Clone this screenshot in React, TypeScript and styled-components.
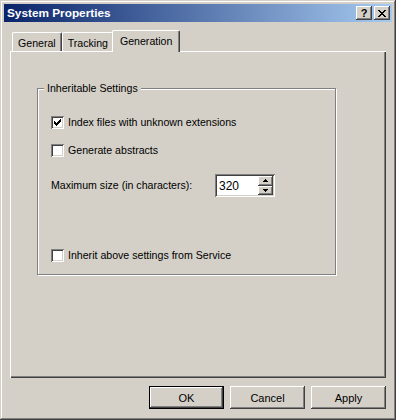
import React from "react";
import styled, { createGlobalStyle, css } from "styled-components";

const Global = createGlobalStyle`
  html, body { margin: 0; padding: 0; background: #d4d0c8; }
  body { font-family: "Liberation Sans", Arial, sans-serif; font-size: 10.6px; color: #000; }
  * { box-sizing: border-box; }
`;

const face = "#d4d0c8";

const raised = css`
  box-shadow: inset -1px -1px 0 #404040, inset 1px 1px 0 #ffffff,
    inset -2px -2px 0 #808080, inset 2px 2px 0 ${face};
`;

const sunken = css`
  box-shadow: inset 1px 1px 0 #808080, inset -1px -1px 0 #ffffff,
    inset 2px 2px 0 #404040, inset -2px -2px 0 ${face};
`;

const Window = styled.div`
  width: 396px;
  height: 420px;
  background: ${face};
  padding: 4px;
  display: flex;
  flex-direction: column;
  box-shadow: inset -1px -1px 0 #404040, inset 1px 1px 0 ${face},
    inset -2px -2px 0 #808080, inset 2px 2px 0 #ffffff;
`;

const TitleBar = styled.div`
  height: 18px;
  flex: none;
  background: linear-gradient(to right, #0a246a, #a6caf0);
  display: flex;
  align-items: center;
  padding: 0 2px 0 3px;
`;

const Title = styled.div`
  flex: 1;
  color: #fff;
  font-weight: bold;
  font-size: 11.8px;
`;

const CaptionButton = styled.div<{ $gap?: number }>`
  width: 16px;
  height: 14px;
  background: ${face};
  ${raised};
  display: flex;
  align-items: center;
  justify-content: center;
  font-weight: bold;
  font-size: 11px;
  line-height: 1;
  margin-left: ${(p) => p.$gap ?? 0}px;
`;

const Body = styled.div`
  flex: 1;
  display: flex;
  flex-direction: column;
  padding: 8px 6px 7px 6px;
`;

const TabStrip = styled.div`
  display: flex;
  align-items: flex-end;
  height: 21px;
  padding-left: 2px;
`;

const Tab = styled.div<{ $active?: boolean }>`
  position: relative;
  height: ${(p) => (p.$active ? 22 : 19)}px;
  padding: ${(p) => (p.$active ? "0 7px 2px 7px" : "1px 5px 0 5px")};
  margin: ${(p) => (p.$active ? "0 -2px -1px -2px" : "0")};
  z-index: ${(p) => (p.$active ? 2 : 1)};
  background: ${face};
  display: flex;
  align-items: center;
  border-top-left-radius: 2px;
  border-top-right-radius: 2px;
  border-top: 1px solid #fff;
  border-left: 1px solid #fff;
  border-right: 1px solid #404040;
  box-shadow: inset -1px 0 0 #808080;
  white-space: nowrap;
`;

const Panel = styled.div`
  flex: 1;
  background: ${face};
  box-shadow: inset 1px 1px 0 #ffffff, inset -1px -1px 0 #404040,
    inset -2px -2px 0 #808080;
  padding: 37px 0 0 27px;
`;

const GroupBox = styled.div`
  position: relative;
  width: 299px;
  height: 187px;
  border: 1px solid #808080;
  box-shadow: 1px 1px 0 #fff, inset 1px 1px 0 #fff;
  padding: 27px 0 0 13px;
  display: flex;
  flex-direction: column;
`;

const Legend = styled.span`
  position: absolute;
  top: -7px;
  left: 6px;
  padding: 0 3px;
  background: ${face};
  line-height: 13px;
`;

const Row = styled.div<{ $mt?: number }>`
  display: flex;
  align-items: center;
  margin-top: ${(p) => p.$mt ?? 0}px;
`;

const CheckBox = styled.div`
  width: 13px;
  height: 13px;
  flex: none;
  background: #fff;
  ${sunken};
  display: flex;
  align-items: center;
  justify-content: center;
`;

const Label = styled.span`
  line-height: 13px;
  margin-left: 4px;
  white-space: nowrap;
`;

const FieldLabel = styled.span`
  width: 164px;
  line-height: 13px;
  white-space: nowrap;
`;

const SpinField = styled.div`
  width: 60px;
  height: 23px;
  background: #fff;
  ${sunken};
  display: flex;
  align-items: center;
  padding: 2px 2px 2px 4px;
`;

const SpinValue = styled.span`
  flex: 1;
  font-size: 12px;
`;

const SpinButtons = styled.div`
  display: flex;
  flex-direction: column;
  width: 15px;
  height: 19px;
`;

const SpinButton = styled.div`
  flex: 1;
  background: ${face};
  ${raised};
  display: flex;
  align-items: center;
  justify-content: center;
`;

const ButtonRow = styled.div`
  display: flex;
  justify-content: flex-end;
  gap: 6px;
  margin-top: 8px;
`;

const Button = styled.div<{ $default?: boolean }>`
  width: 75px;
  height: 23px;
  background: ${face};
  display: flex;
  align-items: center;
  justify-content: center;
  font-size: 11px;
  ${(p) =>
    p.$default
      ? css`
          border: 1px solid #000;
          box-shadow: inset -1px -1px 0 #404040, inset 1px 1px 0 #ffffff,
            inset -2px -2px 0 #808080;
        `
      : raised};
`;

const Check = () => (
  <svg width="7" height="7" viewBox="0 0 7 7" shapeRendering="crispEdges">
    <path
      d="M0 2h1v3h-1zM1 3h1v3h-1zM2 4h1v3h-1zM3 3h1v3h-1zM4 2h1v3h-1zM5 1h1v3h-1zM6 0h1v3h-1z"
      fill="#000"
    />
  </svg>
);

const Up = () => (
  <svg width="5" height="3" viewBox="0 0 5 3" shapeRendering="crispEdges">
    <path d="M2 0h1v1h-1zM1 1h3v1h-3zM0 2h5v1h-5z" fill="#000" />
  </svg>
);

const Down = () => (
  <svg width="5" height="3" viewBox="0 0 5 3" shapeRendering="crispEdges">
    <path d="M0 0h5v1h-5zM1 1h3v1h-3zM2 2h1v1h-1z" fill="#000" />
  </svg>
);

const CloseGlyph = () => (
  <svg width="8" height="7" viewBox="0 0 8 7" shapeRendering="crispEdges">
    <path
      d="M0 0h2v1h-2zM6 0h2v1h-2zM1 1h2v1h-2zM5 1h2v1h-2zM2 2h4v1h-4zM3 3h2v1h-2zM2 4h4v1h-4zM1 5h2v1h-2zM5 5h2v1h-2zM0 6h2v1h-2zM6 6h2v1h-2z"
      fill="#000"
    />
  </svg>
);

export default function App() {
  return (
    <>
      <Global />
      <Window>
        <TitleBar>
          <Title>System Properties</Title>
          <CaptionButton>?</CaptionButton>
          <CaptionButton $gap={2}>
            <CloseGlyph />
          </CaptionButton>
        </TitleBar>
        <Body>
          <TabStrip>
            <Tab>General</Tab>
            <Tab>Tracking</Tab>
            <Tab $active>Generation</Tab>
          </TabStrip>
          <Panel>
            <GroupBox>
              <Legend>Inheritable Settings</Legend>
              <Row>
                <CheckBox>
                  <Check />
                </CheckBox>
                <Label>Index files with unknown extensions</Label>
              </Row>
              <Row $mt={15}>
                <CheckBox />
                <Label>Generate abstracts</Label>
              </Row>
              <Row $mt={17}>
                <FieldLabel>Maximum size (in characters):</FieldLabel>
                <SpinField>
                  <SpinValue>320</SpinValue>
                  <SpinButtons>
                    <SpinButton>
                      <Up />
                    </SpinButton>
                    <SpinButton>
                      <Down />
                    </SpinButton>
                  </SpinButtons>
                </SpinField>
              </Row>
              <Row $mt={52}>
                <CheckBox />
                <Label>Inherit above settings from Service</Label>
              </Row>
            </GroupBox>
          </Panel>
          <ButtonRow>
            <Button $default>OK</Button>
            <Button>Cancel</Button>
            <Button>Apply</Button>
          </ButtonRow>
        </Body>
      </Window>
    </>
  );
}
